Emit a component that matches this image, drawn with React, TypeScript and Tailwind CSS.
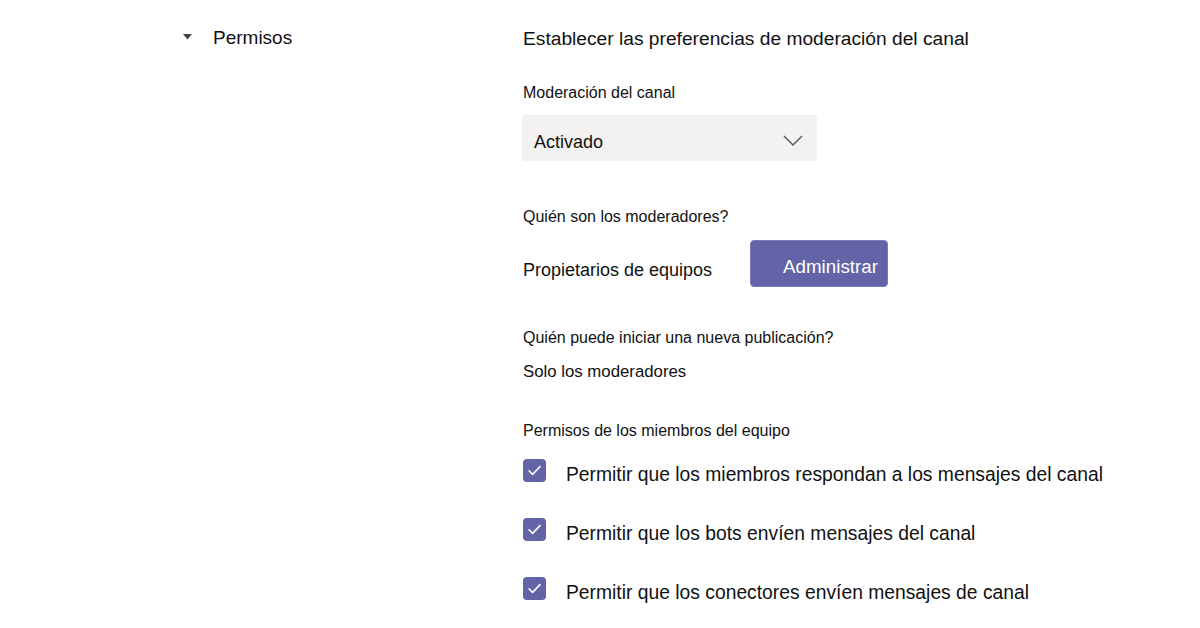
const FONT = { fontFamily: '"Liberation Sans", Arial, sans-serif' };

const PERMISOS = [
  "Permitir que los miembros respondan a los mensajes del canal",
  "Permitir que los bots envíen mensajes del canal",
  "Permitir que los conectores envíen mensajes de canal",
];

const CheckBox = () => (
  <div className="w-[23px] h-[23px] shrink-0 rounded-[4px] bg-[#6264a7]">
    <svg width="23" height="23" viewBox="0 0 23 23" fill="none">
      <path
        d="M6 11.8 L9.6 15.4 L17 7.6"
        stroke="#ffffff"
        strokeWidth="1.6"
        strokeLinecap="round"
        strokeLinejoin="round"
      />
    </svg>
  </div>
);

const App = () => {
  return (
    <div className="w-[1200px] h-[628px] bg-white text-[#111] flex overflow-hidden" style={FONT}>
      {/* lado izquierdo */}
      <div className="w-[523px] shrink-0 pl-[183px] pt-[26px]">
        <div className="flex items-center h-[24px]">
          <svg width="9" height="6" viewBox="0 0 9 6" className="mr-[21px] -mt-[2px]">
            <path d="M0 0 H9 L4.5 5.5 Z" fill="#444" />
          </svg>
          <span className="text-[19px] leading-[24px]">Permisos</span>
        </div>
      </div>

      {/* panel de moderacion */}
      <div className="flex flex-col pt-[27px]">
        <h2 className="text-[19.2px] leading-[24px]">Establecer las preferencias de moderación del canal</h2>

        <p className="mt-[31px] text-[16px] leading-[22px]">Moderación del canal</p>
        <div className="mt-[11px] w-[295px] h-[46px] -ml-px rounded-[3px] bg-[#f3f2f1] flex items-center justify-between pl-[12px] pr-[14px]">
          <span className="text-[18px] leading-[24px] mt-[7px]">Activado</span>
          <svg width="20" height="11" viewBox="0 0 20 11" fill="none" className="mt-[5px]">
            <path d="M1 1 L10 10 L19 1" stroke="#605e5c" strokeWidth="1.5" />
          </svg>
        </div>

        <p className="mt-[45px] text-[16px] leading-[22px]">Quién son los moderadores?</p>
        <div className="mt-[12px] flex items-start">
          <span className="mt-[18px] text-[18px] leading-[24px] w-[227px]">Propietarios de equipos</span>
          <button className="w-[138px] h-[47px] rounded-[4px] bg-[#6264a7] border border-[#7a7cb8] text-white text-[18.8px] leading-[24px] pl-[32px] pt-[7px] text-left">
            Administrar
          </button>
        </div>

        <p className="mt-[40px] text-[16px] leading-[22px]">Quién puede iniciar una nueva publicación?</p>
        <p className="mt-[11px] text-[16.8px] leading-[24px]">Solo los moderadores</p>

        <p className="mt-[36px] text-[16px] leading-[22px]">Permisos de los miembros del equipo</p>
        <div className="mt-[17px] flex flex-col gap-[36px]">
          {PERMISOS.map((txt) => (
            <div key={txt} className="flex items-start h-[23px]">
              <CheckBox />
              <span className="ml-[20px] mt-[4px] text-[19.3px] leading-[24px] whitespace-nowrap">{txt}</span>
            </div>
          ))}
        </div>
      </div>
    </div>
  );
};

export default App;
